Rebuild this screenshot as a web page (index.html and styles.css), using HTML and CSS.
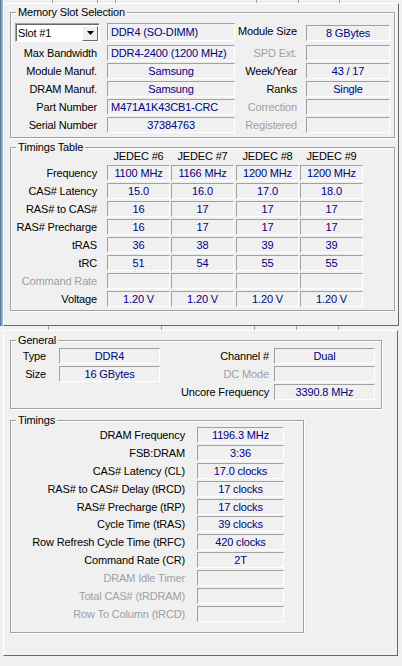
FILE: index.html
```html
<!DOCTYPE html>
<html>
<head>
<meta charset="utf-8">
<link rel="stylesheet" href="styles.css">
</head>
<body>
<div class="shot shot-spd">
  <div class="edge"></div>
  <div class="spd-col">
    <div class="ticks ticks-top"><span></span><span></span><span></span><span></span><span></span><span></span></div>
    <div class="panel spd-panel">
      <div class="group g-slot">
        <div class="legend">Memory Slot Selection</div>
        <div class="slot-grid">
          <div class="combo"><span>Slot #1</span><span class="combo-btn"><svg width="7" height="4" viewBox="0 0 7 4"><polygon points="0,0 7,0 3.5,4" fill="#000"/></svg></span></div>
          <div class="field f-left f-tall">DDR4 (SO-DIMM)</div>
          <div class="lbl lbl-r">Module Size</div>
          <div class="field f-mid">8 GBytes</div>

          <div class="lbl">Max Bandwidth</div>
          <div class="field f-left">DDR4-2400 (1200 MHz)</div>
          <div class="lbl lbl-r dis">SPD Ext.</div>
          <div class="field"></div>

          <div class="lbl">Module Manuf.</div>
          <div class="field">Samsung</div>
          <div class="lbl lbl-r">Week/Year</div>
          <div class="field">43 / 17</div>

          <div class="lbl">DRAM Manuf.</div>
          <div class="field">Samsung</div>
          <div class="lbl lbl-r">Ranks</div>
          <div class="field">Single</div>

          <div class="lbl">Part Number</div>
          <div class="field f-left">M471A1K43CB1-CRC</div>
          <div class="lbl lbl-r dis">Correction</div>
          <div class="field"></div>

          <div class="lbl">Serial Number</div>
          <div class="field">37384763</div>
          <div class="lbl lbl-r dis">Registered</div>
          <div class="field"></div>
        </div>
      </div>

      <div class="group g-jedec">
        <div class="legend legend-j">Timings Table</div>
        <div class="jedec-grid">
          <div></div>
          <div class="hdr">JEDEC #6</div>
          <div class="hdr">JEDEC #7</div>
          <div class="hdr">JEDEC #8</div>
          <div class="hdr">JEDEC #9</div>

          <div class="lbl">Frequency</div>
          <div class="field">1100 MHz</div><div class="field">1166 MHz</div><div class="field">1200 MHz</div><div class="field">1200 MHz</div>

          <div class="lbl">CAS# Latency</div>
          <div class="field">15.0</div><div class="field">16.0</div><div class="field">17.0</div><div class="field">18.0</div>

          <div class="lbl">RAS# to CAS#</div>
          <div class="field">16</div><div class="field">17</div><div class="field">17</div><div class="field">17</div>

          <div class="lbl">RAS# Precharge</div>
          <div class="field">16</div><div class="field">17</div><div class="field">17</div><div class="field">17</div>

          <div class="lbl">tRAS</div>
          <div class="field">36</div><div class="field">38</div><div class="field">39</div><div class="field">39</div>

          <div class="lbl">tRC</div>
          <div class="field">51</div><div class="field">54</div><div class="field">55</div><div class="field">55</div>

          <div class="lbl dis">Command Rate</div>
          <div class="field"></div><div class="field"></div><div class="field"></div><div class="field"></div>

          <div class="lbl">Voltage</div>
          <div class="field">1.20 V</div><div class="field">1.20 V</div><div class="field">1.20 V</div><div class="field">1.20 V</div>
        </div>
      </div>
    </div>
  </div>
</div>

<div class="shot-mem">
  <div class="ticks ticks-bot"><span></span><span></span><span></span><span></span><span></span></div>
  <div class="panel mem-panel">
    <div class="group g-general">
      <div class="legend legend-g">General</div>
      <div class="gen-grid">
        <div class="lbl lbl-g1">Type</div>
        <div class="field">DDR4</div>
        <div class="lbl lbl-g3">Channel #</div>
        <div class="field">Dual</div>

        <div class="lbl lbl-g1">Size</div>
        <div class="field">16 GBytes</div>
        <div class="lbl lbl-g3 dis">DC Mode</div>
        <div class="field"></div>

        <div></div>
        <div></div>
        <div class="lbl lbl-g3">Uncore Frequency</div>
        <div class="field">3390.8 MHz</div>
      </div>
    </div>

    <div class="group g-timings">
      <div class="legend legend-t">Timings</div>
      <div class="tim-grid">
        <div class="lbl">DRAM Frequency</div><div class="field">1196.3 MHz</div>
        <div class="lbl">FSB:DRAM</div><div class="field">3:36</div>
        <div class="lbl">CAS# Latency (CL)</div><div class="field">17.0 clocks</div>
        <div class="lbl">RAS# to CAS# Delay (tRCD)</div><div class="field">17 clocks</div>
        <div class="lbl">RAS# Precharge (tRP)</div><div class="field">17 clocks</div>
        <div class="lbl">Cycle Time (tRAS)</div><div class="field">39 clocks</div>
        <div class="lbl">Row Refresh Cycle Time (tRFC)</div><div class="field">420 clocks</div>
        <div class="lbl">Command Rate (CR)</div><div class="field">2T</div>
        <div class="lbl dis">DRAM Idle Timer</div><div class="field"></div>
        <div class="lbl dis">Total CAS# (tRDRAM)</div><div class="field"></div>
        <div class="lbl dis">Row To Column (tRCD)</div><div class="field"></div>
      </div>
    </div>
  </div>
</div>
</body>
</html>
```

FILE: styles.css
```css
* { box-sizing: border-box; }
html, body { margin: 0; padding: 0; }
body {
  width: 402px;
  height: 666px;
  overflow: hidden;
  background: #f0f0f0;
  font-family: "Liberation Sans", Arial, sans-serif;
  font-size: 11px;
  letter-spacing: -0.15px;
  color: #000;
}

/* ---------- shared ---------- */
.ticks { display: grid; }
.ticks span { border-right: 1px solid #a0a0a0; }
.ticks-top { height: 3px; grid-template-columns: 50px 45px 18px 141px 42px 41px; }
.ticks-bot { height: 4px; grid-template-columns: 49px 113px 93px 42px 42px; }

.panel {
  border-top: 1px solid #fff;
  border-left: 1px solid #fff;
  border-right: 1px solid #696969;
  border-bottom: 1px solid #696969;
}

.group {
  border: 1px solid #a0a0a0;
  box-shadow: 1px 1px 0 #fff, inset 1px 1px 0 #fff;
}
.legend {
  display: block;
  width: max-content;
  height: 13px;
  line-height: 13px;
  margin: -7px 0 0 5px;
  padding: 0 2px;
  background: #f0f0f0;
}

.lbl {
  text-align: right;
  white-space: nowrap;
  line-height: 16px;
  padding-right: 10px;
}
.dis { color: #a0a0a0; }

.field {
  height: 16px;
  line-height: 14px;
  border-top: 1px solid #a0a0a0;
  border-left: 1px solid #a0a0a0;
  border-right: 1px solid #fff;
  border-bottom: 1px solid #fff;
  color: #000080;
  text-align: center;
  white-space: nowrap;
  overflow: hidden;
}
.f-left { text-align: left; padding-left: 3px; }
.f-tall { height: 18px; line-height: 16px; }
.f-mid { align-self: center; }

/* ---------- SPD shot ---------- */
.shot-spd { display: flex; height: 326px; }
.edge {
  width: 3px;
  background: linear-gradient(to right, #4a6a93, #7f9ec5, #b3c8e2);
}
.spd-col { width: 396px; display: flex; flex-direction: column; }
.spd-panel { flex: 1; padding: 8px 0 0 6px; }

.g-slot { width: 385px; height: 126px; margin-bottom: 9px; }
.slot-grid {
  margin-top: 4px;
  display: grid;
  grid-template-columns: 96px 128px 71px 84px;
  grid-template-rows: 20px repeat(5, 16px);
  row-gap: 2px;
}
.lbl-r { padding-right: 9px; }

.combo {
  margin-left: 4px;
  width: 85px;
  height: 19px;
  background: #fff;
  border: 1px solid;
  border-color: #a0a0a0 #fff #fff #a0a0a0;
  box-shadow: inset 1px 1px 0 #696969;
  display: flex;
  align-items: center;
  justify-content: space-between;
  padding: 1px 1px 0 2px;
}
.combo-btn {
  width: 16px;
  height: 15px;
  background: #f0f0f0;
  border: 1px solid;
  border-color: #fff #696969 #696969 #fff;
  display: flex;
  align-items: center;
  justify-content: center;
}

.g-jedec { width: 385px; height: 164px; }
.legend-j { margin-bottom: -5px; }
.jedec-grid {
  display: grid;
  grid-template-columns: 96px 64px 65px 64px 64px;
  grid-template-rows: 14px repeat(8, 16px);
  row-gap: 2px;
}
.jedec-grid .field { width: 63px; }
.hdr { width: 63px; text-align: center; line-height: 14px; }

/* ---------- Memory shot ---------- */
.shot-mem { height: 340px; }
.mem-panel {
  margin-left: 3px;
  width: 395px;
  height: 326px;
  padding: 9px 0 0 6px;
}

.g-general { width: 372px; height: 69px; margin-bottom: 11px; }
.legend-g { margin-bottom: 1px; }
.gen-grid {
  display: grid;
  grid-template-columns: 48px 101px 114px 101px;
  grid-template-rows: repeat(3, 16px);
  row-gap: 2px;
}
.lbl-g1 { padding-right: 13px; }
.lbl-g3 { padding-right: 5px; }

.g-timings { width: 294px; height: 213px; }
.legend-t { margin-bottom: 0; }
.tim-grid {
  display: grid;
  grid-template-columns: 186px 87px;
  grid-auto-rows: 16px;
  row-gap: 1.9px;
}
.tim-grid .lbl { padding-right: 12px; }
```
